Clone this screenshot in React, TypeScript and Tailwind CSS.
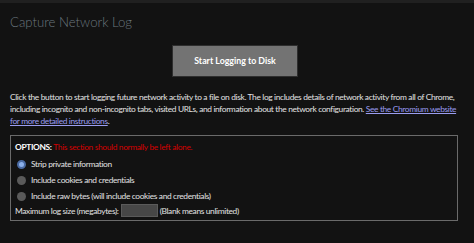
export default function App() {
  const options = [
    { label: 'Strip private information', checked: true },
    { label: 'Include cookies and credentials', checked: false },
    { label: 'Include raw bytes (will include cookies and credentials)', checked: false },
  ]

  return (
    <div className="w-[474px] h-[243px] bg-[#121212] overflow-hidden" style={{ fontFamily: 'Lato, "Noto Sans", sans-serif' }}>
      <div className="h-[3px] bg-[#202020]" />
      <div className="px-[10px]">
        <h1 className="pt-[9px] text-[13.2px] leading-[20px] font-light text-[#6a767e]">Capture Network Log</h1>

        <div className="flex pl-[162px] mt-[13px]">
          <button className="w-[126px] h-[32px] bg-[#737373] border border-[#2e2e2e] text-white text-[8.8px] font-bold">
            Start Logging to Disk
          </button>
        </div>

        <p className="mt-[14px] text-[8.4px] leading-[12px] tracking-[-0.35px] text-[#e2e2e2] whitespace-nowrap">
          Click the button to start logging future network activity to a file on disk. The log includes details of network activity from all of Chrome,
          <br />
          including incognito and non-incognito tabs, visited URLs, and information about the network configuration.{' '}
          <a className="text-[#9a9cf0] underline">See the Chromium website</a>
          <br />
          <a className="text-[#9a9cf0] underline">for more detailed instructions</a>.
        </p>

        <div className="mt-[8px] w-[448px] h-[86px] border border-[#6a6a6a] px-[4px] pt-[5px] text-[8.4px] leading-[12px] tracking-[-0.35px] text-[#e2e2e2]">
          <div className="whitespace-nowrap">
            <span className="font-bold text-white">OPTIONS: </span>
            <span className="text-[#d40000]">This section should normally be left alone.</span>
          </div>
          <div className="mt-[5px] flex flex-col gap-[4px]">
            {options.map((o) => (
              <label key={o.label} className="flex items-center h-[12px] whitespace-nowrap">
                <span
                  className={`ml-[2px] mr-[5px] w-[9px] h-[9px] rounded-full ${
                    o.checked ? 'bg-[#8cb0ea] border-2 border-[#4a6aa2]' : 'bg-[#5a5a5a]'
                  }`}
                />
                {o.label}
              </label>
            ))}
          </div>
          <div className="mt-[2px] flex items-center whitespace-nowrap">
            <span>Maximum log size (megabytes):</span>
            <span className="ml-[2px] mr-[2px] w-[37px] h-[13px] bg-[#474747] border border-[#5a5a5a]" />
            <span>(Blank means unlimited)</span>
          </div>
        </div>
      </div>
    </div>
  )
}
